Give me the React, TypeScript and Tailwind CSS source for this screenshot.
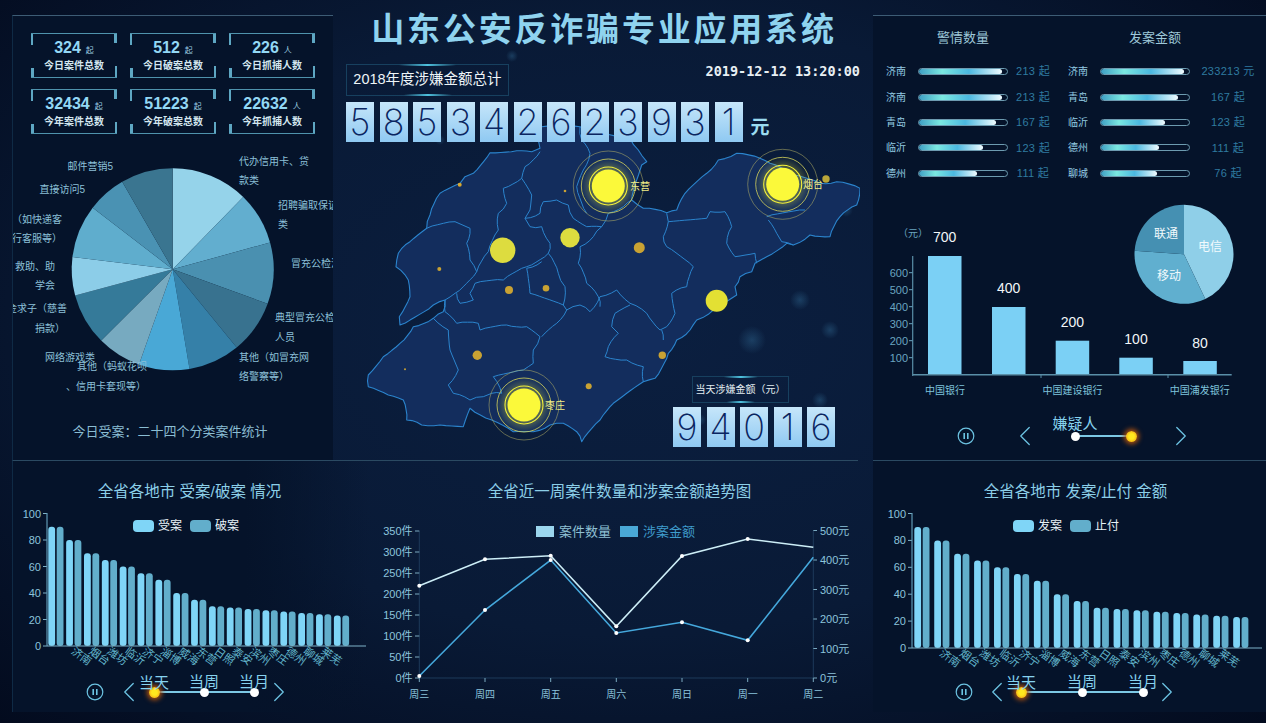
import { ChevronLeft, ChevronRight } from "lucide-react";

const stats = [
  { value: "324", unit: "起", label: "今日案件总数" },
  { value: "512", unit: "起", label: "今日破案总数" },
  { value: "226", unit: "人", label: "今日抓捕人数" },
  { value: "32434", unit: "起", label: "今年案件总数" },
  { value: "51223", unit: "起", label: "今年破案总数" },
  { value: "22632", unit: "人", label: "今年抓捕人数" },
];

const alarmRows = [
  { city: "济南", pct: 94, value: "213 起" },
  { city: "济南", pct: 94, value: "213 起" },
  { city: "青岛", pct: 88, value: "167 起" },
  { city: "临沂", pct: 73, value: "123 起" },
  { city: "德州", pct: 66, value: "111 起" },
];

const moneyRows = [
  { city: "济南", pct: 94, value: "233213 元" },
  { city: "青岛", pct: 88, value: "167 起" },
  { city: "临沂", pct: 73, value: "123 起" },
  { city: "德州", pct: 66, value: "111 起" },
  { city: "聊城", pct: 64, value: "76 起" },
];

const pieSlices = [
  { to: 44.3, color: "#95d3ea" },
  { to: 74.6, color: "#62aecf" },
  { to: 110, color: "#4a90b0" },
  { to: 140.7, color: "#38728f" },
  { to: 170.4, color: "#3580a8" },
  { to: 199.5, color: "#49a8d6" },
  { to: 225.1, color: "#77aac0" },
  { to: 255, color: "#357a99" },
  { to: 277, color: "#8ccde8" },
  { to: 307.6, color: "#5fadcd" },
  { to: 330, color: "#4a92b3" },
  { to: 360, color: "#3a7590" },
];

const pieLabels: [string, number, number, "start" | "end"][] = [
  ["代办信用卡、贷", 239, 165, "start"],
  ["款类", 239, 184, "start"],
  ["招聘骗取保证", 278, 209, "start"],
  ["类", 278, 228, "start"],
  ["冒充公检法", 291, 267, "start"],
  ["典型冒充公检", 275, 321, "start"],
  ["人员", 275, 341, "start"],
  ["其他（如冒充网", 239, 361, "start"],
  ["络警察等）", 239, 380, "start"],
  ["网络游戏类", 45, 361, "start"],
  ["其他（蚂蚁花呗", 147, 370, "end"],
  ["、信用卡套现等）", 146, 390, "end"],
  ["邮件营销5", 113, 170, "end"],
  ["直接访问5", 85, 193, "end"],
  ["（如快递客", 62, 223, "end"],
  ["银行客服等）", 62, 242, "end"],
  ["救助、助", 55, 270, "end"],
  ["学会", 55, 289, "end"],
  ["基金求子（慈善", 67, 312, "end"],
  ["捐款）", 65, 332, "end"],
];

const barValues = [90, 80, 70, 65, 60, 55, 50, 40, 35, 30, 29, 28, 27, 26, 25, 24, 23];
const cities = ["济南", "烟台", "潍坊", "临沂", "济宁", "淄博", "威海", "东营", "日照", "泰安", "滨州", "枣庄", "德州", "聊城", "莱芜"];

const bankBars = [
  { name: "700", x: 928, top: 255, labelY: 241 },
  { name: "400", x: 992, top: 306, labelY: 292 },
  { name: "200", x: 1055.7, top: 339.7, labelY: 326 },
  { name: "100", x: 1119.3, top: 356.7, labelY: 343 },
  { name: "80", x: 1183.3, top: 360, labelY: 347 },
];

const weekX = [419.3, 485, 550.7, 616.3, 682, 747.7, 813.3];
const weekNames = ["周三", "周四", "周五", "周六", "周日", "周一", "周二"];
const caseLine = [585.7, 559.3, 555.7, 626.3, 556, 539, 547.3];
const moneyLine = [676, 610, 560, 633, 622.3, 640.3, 557.3];

// map shapes traced in zoomed crop coordinates (3x, origin 360,130)
const outline =
  "390,68 470,62 515,65 540,55 535,30 545,-10 660,-10 810,25 835,60 860,95 845,105 830,150 815,210 850,235 920,248 950,240 975,190 1040,130 1075,90 1130,70 1200,85 1230,100 1300,135 1380,160 1430,155 1500,175 1490,225 1440,260 1410,320 1350,315 1300,345 1280,340 1220,380 1185,400 1175,425 1140,440 1125,470 1130,495 1060,540 1010,570 990,600 950,630 925,670 885,745 850,755 800,790 760,820 720,870 665,935 650,905 610,880 570,885 520,905 460,905 395,870 330,835 310,890 240,885 185,885 140,870 130,810 85,795 25,770 25,735 70,680 120,640 160,590 220,565 250,545 255,510 220,525 120,585 118,560 150,500 145,450 108,410 115,370 150,335 200,295 210,255 240,190 300,160 315,140 340,130 390,68";

const borders = [
  "200,295 285,275 330,295 320,340 330,390 350,425 285,490 255,510",
  "350,425 385,365 415,300 415,250 440,220 430,175 485,145 515,195 510,240 495,265 510,290 545,290 570,340 565,370 595,430 615,470 610,525 620,540",
  "485,145 495,110 540,65",
  "495,265 540,250 550,215 590,210 625,225 640,265 680,290 725,290 700,320 660,350 655,400 680,460 715,500 720,530",
  "565,370 500,410 430,450 345,460 330,490 340,510 300,520 290,490",
  "545,395 500,415 510,490 610,525",
  "255,510 255,545 290,580 355,580 360,600 440,585 500,590 540,620 520,660 520,700 490,720 400,740 425,790 395,790 370,800 330,810 280,790 265,765 295,720 270,660 265,600 220,565",
  "620,540 590,580 545,620",
  "620,540 660,525 690,545 720,500 770,480 810,520 860,550 900,600 920,590 945,550 935,490 980,470 1000,410 920,350 910,320 925,275 920,250",
  "810,525 765,550 755,590 775,610 745,650 735,680 800,690 850,710 850,755",
  "905,600 910,630",
  "925,275 1040,265 1050,245 1095,245 1115,290 1100,340 1125,380 1185,370 1190,400",
  "1225,270 1250,310 1265,335 1300,345",
  "1220,260 1335,240",
  "725,290 745,250 790,230 815,210",
  "660,-10 665,30 690,70 670,120 650,170 680,250",
];

const suns = [
  { x: 608.3, y: 186, name: "东营", labelX: 630 },
  { x: 782.7, y: 184.3, name: "烟台", labelX: 803 },
  { x: 524, y: 405, name: "枣庄", labelX: 545 },
];

const dots = [
  { x: 502.7, y: 250.3, r: 12.7, c: "#dddc3f" },
  { x: 570, y: 237.7, r: 9.7, c: "#dddc3f" },
  { x: 716.7, y: 300.7, r: 11, c: "#e3e033" },
  { x: 639.3, y: 247.7, r: 5.5, c: "#c9a233" },
  { x: 477.3, y: 355.3, r: 4.7, c: "#c9a233" },
  { x: 509, y: 290, r: 4, c: "#c9a233" },
  { x: 546, y: 288.3, r: 3.3, c: "#c9a233" },
  { x: 662.3, y: 355.3, r: 3.7, c: "#c9a233" },
  { x: 588.7, y: 386.3, r: 3, c: "#c9a233" },
  { x: 439.3, y: 269, r: 2, c: "#c9a233" },
  { x: 405, y: 369.3, r: 1, c: "#c9a233" },
  { x: 459.7, y: 184.7, r: 2, c: "#d8a82f" },
  { x: 565, y: 191, r: 1.3, c: "#c9a233" },
  { x: 826, y: 179, r: 3.7, c: "#b9a63a" },
];

const glows = [
  [512, 56, 6],
  [800, 300, 10],
  [752, 340, 14],
  [830, 330, 9],
  [440, 140, 5],
  [700, 420, 6],
  [846, 210, 7],
  [820, 400, 8],
];

// crop coords to page coords, with a little wobble so borders look hand traced
function zoomed(points: string) {
  const pts = points.split(" ").map((p) => {
    const [x, y] = p.split(",").map(Number);
    return [x / 3 + 360, y / 3 + 130];
  });
  const out: string[] = [];
  pts.forEach(([x, y], i) => {
    out.push(`${x.toFixed(1)},${y.toFixed(1)}`);
    const next = pts[i + 1];
    if (!next) return;
    const dx = next[0] - x;
    const dy = next[1] - y;
    const len = Math.hypot(dx, dy);
    const steps = Math.floor(len / 5);
    for (let s = 1; s < steps; s++) {
      const t = s / steps;
      const w = Math.sin(x * 12.9 + y * 78.2 + s * 37.7) * 1.1;
      out.push(`${(x + dx * t - (dy / len) * w).toFixed(1)},${(y + dy * t + (dx / len) * w).toFixed(1)}`);
    }
  });
  return out.join(" ");
}

function arc(cx: number, cy: number, r: number, from: number, to: number) {
  const pt = (a: number) => {
    const rad = (a * Math.PI) / 180;
    return `${(cx + r * Math.sin(rad)).toFixed(2)} ${(cy - r * Math.cos(rad)).toFixed(2)}`;
  };
  const large = to - from > 180 ? 1 : 0;
  return `M${cx} ${cy}L${pt(from)}A${r} ${r} 0 ${large} 1 ${pt(to)}Z`;
}

function StatCard({ value, unit, label }: { value: string; unit: string; label: string }) {
  return (
    <div className="relative flex h-[45px] flex-col items-center border-y border-[#4f93ad]">
      <span className="absolute left-0 top-0 h-[11px] w-[2px] bg-[#5ea7c3]" />
      <span className="absolute right-0 top-0 h-[9px] w-[3px] bg-[#5ea7c3]" />
      <span className="absolute bottom-0 left-0 h-[9px] w-[3px] bg-[#5ea7c3]" />
      <span className="absolute bottom-0 right-0 h-[11px] w-[2px] bg-[#5ea7c3]" />
      <div className="mt-[3px] flex h-[22px] items-baseline gap-[5px] text-[16px] font-bold leading-[22px] text-[#93d8f5]">
        {value}
        <span className="text-[8px] font-normal text-[#9fd0e4]">{unit}</span>
      </div>
      <div className="text-[10px] font-bold leading-[14px] text-[#d3e6ef]">{label}</div>
    </div>
  );
}

function Meter({ city, pct, value, valueWidth }: { city: string; pct: number; value: string; valueWidth: string }) {
  return (
    <div className="flex h-[25.4px] items-center">
      <span className="w-[32px] text-[10px] text-[#93cbe2]">{city}</span>
      <div className="h-[7px] w-[90px] overflow-hidden rounded-full border border-[#6d9bb0]">
        <div
          className="h-full rounded-full bg-[linear-gradient(90deg,#3f9fc4,#7be8e0_28%,#4bb8e0_60%,#f0fbff)]"
          style={{ width: `${pct}%` }}
        />
      </div>
      <span className={`${valueWidth} text-center text-[11px] tracking-[0.3px] text-[#2f7ba0]`}>{value}</span>
    </div>
  );
}

function Digits({ value }: { value: string }) {
  return (
    <div className="flex gap-[5.5px]">
      {value.split("").map((d, i) => (
        <div
          key={i}
          className="flex h-[40px] w-[28px] items-center justify-center bg-[linear-gradient(180deg,#c6e6fa,#8fc9f2)] font-['Inter',sans-serif] text-[36px] font-extralight leading-none text-[#0a2560]"
        >
          {d}
        </div>
      ))}
    </div>
  );
}

function TitleBox({ children, className }: { children: React.ReactNode; className: string }) {
  return (
    <div className={`relative flex items-center justify-center border border-[#17405f] ${className}`}>
      <span className="absolute -top-px left-1/2 h-[2px] w-[36%] -translate-x-1/2 bg-[linear-gradient(90deg,transparent,#4fc3e0,transparent)]" />
      <span className="absolute -bottom-px left-1/2 h-[2px] w-[30%] -translate-x-1/2 bg-[linear-gradient(90deg,transparent,#4fc3e0,transparent)]" />
      {children}
    </div>
  );
}

function PauseIcon() {
  return (
    <svg width="18" height="18" viewBox="0 0 18 18" className="shrink-0" fill="none">
      <circle cx="9" cy="9" r="7.8" stroke="#6cc3e2" strokeWidth="1.2" />
      <path d="M7.2 6v6M10.8 6v6" stroke="#6cc3e2" strokeWidth="1.6" />
    </svg>
  );
}

function Timeline({
  nodes,
  active,
  trackWidth,
  gap,
  labelClass,
}: {
  nodes: string[];
  active: number;
  trackWidth: string;
  gap: string;
  labelClass: string;
}) {
  return (
    <div className={`flex h-[24px] items-center ${gap}`}>
      <PauseIcon />
      <ChevronLeft size={34} strokeWidth={0.9} className="mx-[-12px] shrink-0 text-[#6cc3e2]" />
      <div className={`relative flex h-[2px] items-center justify-between bg-[#7cc8e4] ${trackWidth}`}>
        {nodes.map((label, i) => (
          <div key={i} className="relative flex w-0 justify-center">
            {i === active ? (
              <span className="size-[11px] shrink-0 rounded-full bg-[radial-gradient(circle,#ffe81f_35%,#f79a10_90%)] shadow-[0_0_5px_2px_#b5540e]" />
            ) : (
              <span className="size-[9px] shrink-0 rounded-full bg-white" />
            )}
            {label && (
              <span className={`absolute whitespace-nowrap text-[15px] leading-[18px] text-[#86d2ee] ${labelClass}`}>{label}</span>
            )}
          </div>
        ))}
      </div>
      <ChevronRight size={34} strokeWidth={0.9} className="mx-[-12px] shrink-0 text-[#6cc3e2]" />
    </div>
  );
}

function CityBars({
  viewX,
  width,
  axisX,
  zeroY,
  firstBar,
  step,
  firstLabel,
  legend,
  legendX,
}: {
  viewX: number;
  width: number;
  axisX: number;
  zeroY: number;
  firstBar: number;
  step: number;
  firstLabel: number;
  legend: string[];
  legendX: number[];
}) {
  const perUnit = (zeroY - 513.5) / 100;
  return (
    <svg width={width} height={167} viewBox={`${viewX} 505 ${width} 167`} className="block">
      {[0, 20, 40, 60, 80, 100].map((t) => (
        <g key={t}>
          <line x1={axisX - 4} x2={axisX} y1={zeroY - t * perUnit} y2={zeroY - t * perUnit} stroke="#7fb3c9" />
          <text x={axisX - 6} y={zeroY - t * perUnit + 4} textAnchor="end" fontSize="11" fill="#8cc4dc">
            {t}
          </text>
        </g>
      ))}
      <line x1={axisX} x2={axisX} y1={513} y2={zeroY} stroke="#5f9ab5" strokeWidth="1.2" />
      {barValues.map((v, i) => {
        const x = firstBar + i * step;
        const h = v * perUnit;
        return (
          <g key={i}>
            <rect x={x} y={zeroY - h} width={6.8} height={h} rx={3} fill="#7fd5f7" />
            <rect x={x + 8.4} y={zeroY - h} width={6.8} height={h} rx={3} fill="#62aecb" />
          </g>
        );
      })}
      <line x1={axisX} x2={viewX + width - 4} y1={zeroY} y2={zeroY} stroke="#7fb3c9" strokeWidth="1.2" />
      {cities.map((c, i) => {
        const x = firstLabel + i * step;
        return (
          <text
            key={c}
            x={x}
            y={zeroY + 14}
            textAnchor="middle"
            fontSize="11"
            fill="#62b6cc"
            transform={`rotate(36 ${x} ${zeroY + 10})`}
          >
            {c}
          </text>
        );
      })}
      {legend.map((name, i) => (
        <g key={name}>
          <rect x={legendX[i]} y={520} width={21} height={12} rx={4} fill={i === 0 ? "#7fd5f7" : "#62aecb"} />
          <text x={legendX[i] + 25} y={530} fontSize="12" fill="#e9f3f7">
            {name}
          </text>
        </g>
      ))}
    </svg>
  );
}

function CenterBackdrop() {
  return (
    <svg width="515" height="460" viewBox="345 0 515 460" className="absolute left-0 top-0">
      <defs>
        <radialGradient id="sunGlow">
          <stop offset="55%" stopColor="#f5f23a" stopOpacity="0.35" />
          <stop offset="100%" stopColor="#f5f23a" stopOpacity="0" />
        </radialGradient>
        <radialGradient id="haze">
          <stop offset="0%" stopColor="#3a7ca8" stopOpacity="0.35" />
          <stop offset="100%" stopColor="#3a7ca8" stopOpacity="0" />
        </radialGradient>
      </defs>
      {glows.map(([x, y, r], i) => (
        <circle key={i} cx={x} cy={y} r={r} fill="url(#haze)" />
      ))}
      <polygon points={zoomed(outline)} fill="#132d5d" stroke="#2b84cd" strokeWidth="1.1" strokeLinejoin="round" />
      {borders.map((b, i) => (
        <polyline key={i} points={zoomed(b)} fill="none" stroke="#2b84cd" strokeWidth="1" strokeLinejoin="round" />
      ))}
      {dots.map((d, i) => (
        <circle key={i} cx={d.x} cy={d.y} r={d.r} fill={d.c} />
      ))}
      {suns.map((s) => (
        <g key={s.name}>
          <circle cx={s.x} cy={s.y} r={27} fill="url(#sunGlow)" />
          <circle cx={s.x} cy={s.y} r={35} fill="none" stroke="#b7b466" strokeWidth="0.8" opacity="0.65" />
          <circle cx={s.x} cy={s.y} r={27} fill="none" stroke="#d6d35a" strokeWidth="1" opacity="0.8" />
          <circle cx={s.x} cy={s.y} r={19} fill="none" stroke="#f5f23a" strokeWidth="1.1" />
          <circle cx={s.x} cy={s.y} r={16.5} fill="#fbf93a" />
          <text x={s.labelX} y={s.y + 4} fontSize="10" fill="#f3ee86">
            {s.name}
          </text>
        </g>
      ))}
    </svg>
  );
}

export default function App() {
  return (
    <div className="flex h-[723px] w-[1266px] flex-col overflow-hidden bg-[radial-gradient(ellipse_at_50%_45%,#0b1f40_0%,#091a36_55%,#030b1e_100%)] pl-3 font-['Liberation_Sans','Noto_Sans_CJK_SC',sans-serif]">
      <div className="flex h-[460px] shrink-0">
        {/* left column */}
        <div className="mt-[15px] w-[321px] border-l border-t border-l-[#0f2a45] border-t-[#3d5c75] bg-[#05132a]">
          <div className="grid grid-cols-[86px_86px_86px] gap-x-[13px] gap-y-[11px] pl-[18px] pt-[17px]">
            {stats.map((s) => (
              <StatCard key={s.label} {...s} />
            ))}
          </div>
          <svg width="320" height="280" viewBox="13 140 320 280" className="mt-[6px] block">
            {pieSlices.map((s, i) => (
              <path key={i} d={arc(172.7, 269.3, 101, i === 0 ? 0 : pieSlices[i - 1].to, s.to)} fill={s.color} />
            ))}
            {pieLabels.map(([text, x, y, anchor]) => (
              <text key={text} x={x} y={y} textAnchor={anchor} fontSize="10" fill="#8cc0d8">
                {text}
              </text>
            ))}
          </svg>
          <div className="pr-[6px] pt-[2px] text-center text-[13px] leading-[20px] text-[#8abdd3]">今日受案：二十四个分类案件统计</div>
        </div>

        {/* center column */}
        <div className="relative ml-3 w-[515px]">
          <CenterBackdrop />
          <div className="relative flex h-full flex-col">
            <div className="flex h-[60px] items-center justify-center pl-[3px] text-[33px] font-bold leading-[60px] tracking-[2.8px] text-[#8fd3ef]">
              山东公安反诈骗专业应用系统
            </div>
            <div className="mt-[4px] flex items-start justify-between pl-px">
              <TitleBox className="h-[32px] w-[163px] text-[14.5px] text-[#eef5f8]">2018年度涉嫌金额总计</TitleBox>
              <span className="font-['DejaVu_Sans_Mono',monospace] text-[13.5px] font-bold leading-[14px] text-[#e8f0f4]">
                2019-12-12 13:20:00
              </span>
            </div>
            <div className="mt-[6px] flex items-end gap-[8px] pl-px">
              <Digits value="585342623931" />
              <span className="pb-px text-[19px] font-bold leading-[26px] text-[#9bdcf0]">元</span>
            </div>
            <div className="mt-auto flex flex-col items-end pb-[13px] pr-[25px]">
              <TitleBox className="mr-[46px] h-[27px] w-[97px] text-[10px] text-[#e4eef2]">当天涉嫌金额（元）</TitleBox>
              <div className="mt-[4px]">
                <Digits value="94016" />
              </div>
            </div>
          </div>
        </div>

        {/* right column */}
        <div className="ml-[13px] mt-[15px] w-[393px] border-t border-[#3d5c75] bg-[#05132a]">
          <div className="h-[185px] pl-[13px]">
            <div className="flex h-[43px] items-center text-[13px] text-[#9ec8d9]">
              <span className="ml-[51px] w-[52px] text-center">警情数量</span>
              <span className="ml-[140px] w-[52px] text-center">发案金额</span>
            </div>
            <div className="flex gap-[10px]">
              <div className="flex flex-col">
                {alarmRows.map((r, i) => (
                  <Meter key={i} {...r} valueWidth="w-[50px]" />
                ))}
              </div>
              <div className="flex flex-col">
                {moneyRows.map((r, i) => (
                  <Meter key={i} {...r} valueWidth="w-[76px]" />
                ))}
              </div>
            </div>
          </div>
          <svg width="393" height="200" viewBox="873 200 393 200" className="block">
            <path d={arc(1184, 253.3, 49.5, 0, 154.5)} fill="#8fcfe8" />
            <path d={arc(1184, 253.3, 49.5, 154.5, 274)} fill="#60afcf" />
            <path d={arc(1184, 253.3, 49.5, 274, 360)} fill="#4590b2" />
            <text x="1210" y="250" textAnchor="middle" fontSize="12" fill="#f2fafd">电信</text>
            <text x="1169" y="279" textAnchor="middle" fontSize="12" fill="#f2fafd">移动</text>
            <text x="1166" y="237" textAnchor="middle" fontSize="12" fill="#f2fafd">联通</text>
            <text x="913" y="236" textAnchor="middle" fontSize="10" fill="#6aa5c0">（元）</text>
            {[100, 200, 300, 400, 500, 600].map((t) => (
              <g key={t}>
                <line x1="909" x2="913" y1={373.7 - t * 0.17} y2={373.7 - t * 0.17} stroke="#6aa5c0" />
                <text x="908" y={377.5 - t * 0.17} textAnchor="end" fontSize="11" fill="#6aa5c0">{t}</text>
              </g>
            ))}
            <line x1="912.7" x2="912.7" y1="255" y2="375" stroke="#5a8fa8" strokeWidth="1.2" />
            {bankBars.map((b) => (
              <g key={b.name}>
                <rect x={b.x} y={b.top} width="33.5" height={373.7 - b.top} fill="#7bd0f5" />
                <text x={b.x + 16.7} y={b.labelY} textAnchor="middle" fontSize="14" fill="#f2f6f8">{b.name}</text>
              </g>
            ))}
            <line x1="912.7" x2="1231.7" y1="373.7" y2="373.7" stroke="#5a8fa8" strokeWidth="1.4" />
            <line x1="1041" x2="1041" y1="373.7" y2="377" stroke="#5a8fa8" />
            <line x1="1168" x2="1168" y1="373.7" y2="377" stroke="#5a8fa8" />
            <text x="945" y="393" textAnchor="middle" fontSize="10" fill="#7fc4dc">中国银行</text>
            <text x="1072.6" y="393" textAnchor="middle" fontSize="10" fill="#7fc4dc">中国建设银行</text>
            <text x="1199.7" y="393" textAnchor="middle" fontSize="10" fill="#7fc4dc">中国浦发银行</text>
          </svg>
          <div className="pl-[84px] pt-[23px]">
            <Timeline nodes={["嫌疑人", ""]} active={1} trackWidth="w-[56px]" gap="gap-[45px]" labelClass="bottom-[8px]" />
          </div>
        </div>
      </div>

      {/* bottom row */}
      <div className="flex h-[252px]">
        <div className="flex w-[846px] border-l border-t border-l-[#0f2a45] border-t-[#2b4a62]">
          <div className="w-[357px] bg-[linear-gradient(90deg,#05132a_65%,transparent)]">
            <div className="h-[44px] pr-[4px] pt-[21px] text-center text-[15.5px] leading-[20px] text-[#8ccfe8]">全省各地市 受案/破案 情况</div>
            <CityBars
              viewX={13}
              width={357}
              axisX={47}
              zeroY={646}
              firstBar={48.3}
              step={17.85}
              firstLabel={81.7}
              legend={["受案", "破案"]}
              legendX={[133, 190]}
            />
            <div className="mt-[8px] pl-[73px]">
              <Timeline nodes={["当天", "当周", "当月"]} active={0} trackWidth="w-[100px]" gap="gap-[20px]" labelClass="bottom-[6px]" />
            </div>
          </div>
          <div className="w-[488px]">
            <div className="h-[44px] pl-[11px] pt-[21px] text-center text-[15.5px] leading-[20px] text-[#8ccfe8]">全省近一周案件数量和涉案金额趋势图</div>
            <svg width="488" height="207" viewBox="370 505 488 207" className="block">
              <line x1="419.3" x2="419.3" y1="531" y2="678" stroke="#1d3a5a" />
              <line x1="813.3" x2="813.3" y1="531" y2="678" stroke="#1d3a5a" />
              <line x1="419.3" x2="813.3" y1="678" y2="678" stroke="#1d3a5a" />
              {[0, 50, 100, 150, 200, 250, 300, 350].map((t) => {
                const y = 678 - t * 0.42;
                return (
                  <g key={t}>
                    <line x1="415" x2="419.3" y1={y} y2={y} stroke="#7aa9c0" />
                    <text x="412.5" y={y + 4} textAnchor="end" fontSize="11" fill="#8cc4dc">{t}件</text>
                  </g>
                );
              })}
              {[0, 100, 200, 300, 400, 500].map((t) => {
                const y = 678 - t * 0.295;
                return (
                  <g key={t}>
                    <line x1="813.3" x2="817" y1={y} y2={y} stroke="#7aa9c0" />
                    <text x="820" y={y + 4} fontSize="11" fill="#8cc4dc">{t}元</text>
                  </g>
                );
              })}
              {weekX.map((x, i) => (
                <g key={x}>
                  <line x1={x} x2={x} y1="678" y2="682" stroke="#7aa9c0" />
                  <text x={x} y="698" textAnchor="middle" fontSize="10" fill="#8cc4dc">{weekNames[i]}</text>
                </g>
              ))}
              <polyline points={weekX.map((x, i) => `${x},${caseLine[i]}`).join(" ")} fill="none" stroke="#cdeef7" strokeWidth="1.6" />
              <polyline points={weekX.map((x, i) => `${x},${moneyLine[i]}`).join(" ")} fill="none" stroke="#45a8dc" strokeWidth="1.6" />
              {weekX.slice(0, 6).map((x, i) => (
                <g key={x}>
                  <circle cx={x} cy={caseLine[i]} r="2" fill="#fff" />
                  <circle cx={x} cy={moneyLine[i]} r="2" fill="#fff" />
                </g>
              ))}
              <rect x="536" y="526" width="18" height="11" fill="#9bd6ee" />
              <text x="559" y="536" fontSize="13" fill="#8fc0d4">案件数量</text>
              <rect x="620" y="526" width="18" height="11" fill="#4aa8d6" />
              <text x="643" y="536" fontSize="13" fill="#3f9ccc">涉案金额</text>
            </svg>
          </div>
        </div>
        <div className="ml-[15px] w-[393px] border-t border-[#2b4a62] bg-[#05132a]">
          <div className="h-[44px] pl-[12px] pt-[21px] text-center text-[15.5px] leading-[20px] text-[#8ccfe8]">全省各地市 发案/止付 金额</div>
          <CityBars
            viewX={873}
            width={393}
            axisX={912}
            zeroY={648}
            firstBar={914.3}
            step={19.93}
            firstLabel={950}
            legend={["发案", "止付"]}
            legendX={[1013, 1070]}
          />
          <div className="mt-[8px] pl-[82px]">
            <Timeline nodes={["当天", "当周", "当月"]} active={0} trackWidth="w-[122px]" gap="gap-[19px]" labelClass="bottom-[6px]" />
          </div>
        </div>
      </div>
    </div>
  );
}
